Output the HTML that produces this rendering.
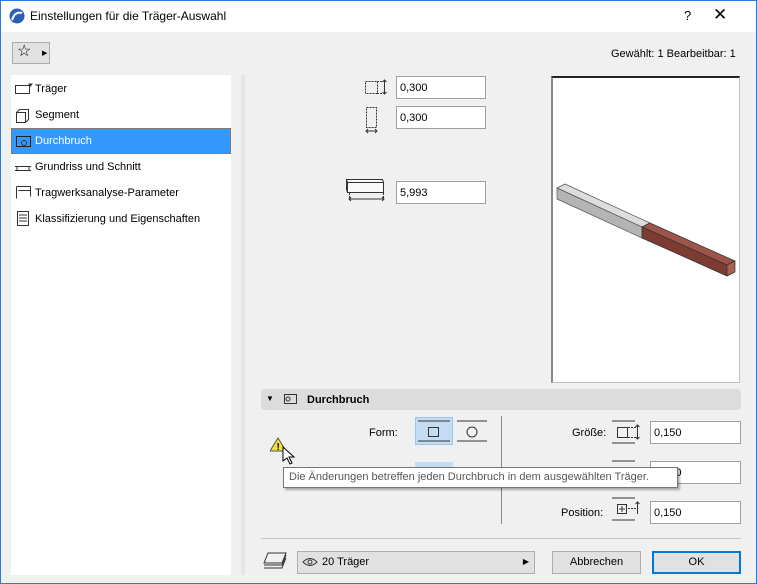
<!DOCTYPE html>
<html><head><meta charset="utf-8"><style>
*{box-sizing:border-box;margin:0;padding:0}
body{width:757px;height:584px;overflow:hidden;font-family:"Liberation Sans",sans-serif;font-size:11px;color:#000;background:#f0f0f0;position:relative}
.win{position:absolute;left:0;top:0;width:757px;height:584px;background:#f0f0f0}
.frame{position:absolute;left:0;top:0;width:757px;height:584px;border:1px solid #2b79d8;pointer-events:none}
.title{position:absolute;left:0;top:0;width:757px;height:32px;background:#fff}
.abs{position:absolute}
.inp{position:absolute;background:#fff;border:1px solid #a0a0a0;height:23px;padding:1px 3px 0;line-height:21px;font-size:11px}
.li{position:absolute;left:11px;width:220px;height:26px;line-height:26px;padding-left:24px;font-size:11px}
.btn{position:absolute;background:#e1e1e1;border:1px solid #adadad;text-align:center;font-size:11px}
</style></head><body><div class="win">
<div class="title">
<svg class="abs" style="left:9px;top:8px" width="16" height="16"><circle cx="8" cy="8" r="7.5" fill="#2a5fb8"/><path d="M3 12 Q6 3 13 5" stroke="#fff" stroke-width="2" fill="none"/></svg>
<div class="abs" style="left:30px;top:9px;font-size:12px">Einstellungen für die Träger-Auswahl</div>
<div class="abs" style="left:684px;top:8px;font-size:13px">?</div>
<div class="abs" style="left:713px;top:5px;font-size:17px;font-weight:300">✕</div>
</div>
<div class="btn" style="left:12px;top:42px;width:38px;height:22px;font-size:16px;line-height:18px;text-align:left;padding-left:4px">☆<span style="font-size:7px;position:absolute;left:29px;top:2px">▶</span></div>
<div class="abs" style="left:611px;top:48px">Gewählt: 1 Bearbeitbar: 1</div>
<div class="abs" style="left:11px;top:75px;width:220px;height:500px;background:#fff"></div>
<div class="abs" style="left:241px;top:75px;width:4px;height:500px;background:#e6e6e6"></div>
<div class="li" style="top:76px">Träger</div>
<div class="li" style="top:102px">Segment</div>
<div class="li" style="top:128px;background:#3399ff;color:#fff;border:1px dotted #c06000;left:11px;width:220px;padding-left:23px;line-height:24px">Durchbruch</div>
<div class="li" style="top:154px">Grundriss und Schnitt</div>
<div class="li" style="top:180px">Tragwerksanalyse-Parameter</div>
<div class="li" style="top:206px">Klassifizierung und Eigenschaften</div>
<svg class="abs" style="left:14px;top:82px" width="20" height="150" fill="none" stroke="#333">
<rect x="1.5" y="3.5" width="14" height="8"/><path d="M15 2l3 0l-1.5 2z" fill="#333"/>
<path d="M2.5 30.5h9v10h-9zM2.5 30.5l3-3h9v10l-3 3"/>
<rect x="2.5" y="54.5" width="14" height="10" stroke="#222"/><circle cx="10" cy="61" r="2.5"/>
<path d="M1 84.5h16M1 88.5h16M3 84.5v4M15 84.5v4"/>
<path d="M2.5 104.5h14v10M2.5 104.5v12M4.5 108.5h12"/>
<path d="M3.5 129.5h11v14h-11zM5 133h8M5 136h8M5 139h8"/>
</svg>
<svg class="abs" style="left:344px;top:75px" width="50" height="130" fill="none" stroke="#333">
<rect x="21.5" y="6.5" width="12" height="12" stroke-dasharray="2 1"/><path d="M33 6.5h6M33 18.5h6" stroke-dasharray="2 1"/><path d="M40.5 5v14M38.5 7l2-2 2 2M38.5 17l2 2 2-2"/>
<rect x="22.5" y="32.5" width="10" height="20" stroke-dasharray="2 1"/><path d="M22 56h11M24 54l-2 2 2 2M31 54l2 2-2 2"/>
<path d="M3.5 107.5h36v10h-36zM3.5 107.5l-1-3h36l1 3M2.5 104.5v10l1 3" fill="#f8f8f8"/><path d="M5.5 118v6M39.5 118v6" stroke-dasharray="2 1"/><path d="M5 124h35M7 122l-2 2 2 2M38 122l2 2-2 2"/>
</svg>
<div class="inp" style="left:396px;top:76px;width:90px">0,300</div>
<div class="inp" style="left:396px;top:106px;width:90px">0,300</div>
<div class="inp" style="left:396px;top:181px;width:90px">5,993</div>
<div class="abs" style="left:551px;top:76px;width:189px;height:307px;background:#fff;border:1px solid #c0c0c0;border-top:2px solid #222;border-left:2px solid #888"></div>
<svg class="abs" style="left:551px;top:76px" width="189" height="307" stroke-linejoin="round">
<polygon points="6,112 14,108 99,147 91,151" fill="#ddd" stroke="#555" stroke-width=".7"/>
<polygon points="6,112 91,151 91,162 6,123" fill="#b4b4b4" stroke="#555" stroke-width=".7"/>
<polygon points="91,151 99,147 184,185 176,189" fill="#9c5548" stroke="#333" stroke-width=".7"/>
<polygon points="91,151 176,189 176,200 91,162" fill="#7c3c32" stroke="#333" stroke-width=".7"/>
<polygon points="176,189 184,185 184,196 176,200" fill="#a86052" stroke="#333" stroke-width=".7"/>
</svg>
<div class="abs" style="left:261px;top:389px;width:480px;height:21px;background:#dcdcdc;border-radius:3px"></div>
<div class="abs" style="left:266px;top:394px;font-size:8px">▼</div>
<svg class="abs" style="left:281px;top:392px" width="18" height="14" fill="none" stroke="#333"><rect x="3.5" y="2.5" width="12" height="9"/><circle cx="7" cy="7" r="2"/></svg>
<div class="abs" style="left:307px;top:394px;font-weight:bold">Durchbruch</div>
<div class="abs" style="left:369px;top:427px">Form:</div>
<div class="abs" style="left:415px;top:417px;width:38px;height:28px;background:#c3dcf3;border:1px solid #9cc5ee"></div>
<svg class="abs" style="left:415px;top:417px" width="75" height="30" fill="none" stroke="#333"><path d="M3 4h32M3 24h32M42 4h30M42 24h30"/><rect x="13.5" y="10.5" width="10" height="9"/><circle cx="57" cy="15" r="5"/></svg>
<div class="abs" style="left:415px;top:462px;width:38px;height:10px;background:#c3dcf3"></div>
<div class="abs" style="left:501px;top:416px;width:1px;height:108px;background:#888"></div>
<svg class="abs" style="left:270px;top:437px" width="18" height="15"><polygon points="8,1 16,14 0,14" fill="#f2e234" stroke="#555"/><text x="6.5" y="13" font-size="10" font-weight="bold" font-family="Liberation Sans">!</text></svg>
<div class="abs" style="left:572px;top:427px">Größe:</div>
<div class="abs" style="left:561px;top:507px">Position:</div>
<svg class="abs" style="left:611px;top:420px" width="35" height="105" fill="none" stroke="#333"><path d="M1 1h23M1 23h23M1 41h23M1 100h23M1 78h23"/><rect x="6.5" y="7.5" width="10" height="10"/><path d="M17 7.5h8M17 17.5h8M17 88.5h8" stroke-dasharray="2 1"/><path d="M26.5 5v14M24.5 7l2-2 2 2M24.5 17l2 2 2-2M26.5 82v12M24.5 84l2-2 2 2M11 86v6M8 89h6"/><rect x="6.5" y="84.5" width="9" height="9"/></svg>
<div class="inp" style="left:650px;top:421px;width:91px">0,150</div>
<div class="inp" style="left:650px;top:461px;width:91px">0,150</div>
<div class="inp" style="left:650px;top:501px;width:91px">0,150</div>
<div class="abs" style="left:283px;top:467px;width:395px;height:21px;background:#fff;border:1px solid #767676;box-shadow:2px 2px 2px rgba(0,0,0,.3);padding:3px 5px;color:#575757">Die Änderungen betreffen jeden Durchbruch in dem ausgewählten Träger.</div>
<svg class="abs" style="left:282px;top:446px" width="16" height="20"><path d="M1 1v14l4-3 3 6 2-1-3-6h5z" fill="#fff" stroke="#000"/></svg>
<div class="abs" style="left:261px;top:538px;width:480px;height:1px;background:#c8c8c8"></div>
<svg class="abs" style="left:262px;top:551px" width="26" height="20" fill="none" stroke="#333"><path d="M6 2h18l-4 10h-18zM2 14h18l4-10M2 17h18l4-10"/></svg>
<div class="btn" style="left:297px;top:551px;width:238px;height:23px;text-align:left;padding:4px 0 0 24px">20 Träger<span style="position:absolute;right:5px;top:5px;font-size:8px">▶</span></div>
<svg class="abs" style="left:302px;top:557px" width="16" height="10" fill="none" stroke="#333"><path d="M1 5q7-7 14 0q-7 7-14 0z"/><circle cx="8" cy="5" r="2"/></svg>
<div class="btn" style="left:552px;top:551px;width:89px;height:23px;line-height:21px">Abbrechen</div>
<div class="btn" style="left:652px;top:551px;width:89px;height:23px;line-height:19px;border:2px solid #0078d7">OK</div>
</div><div class="frame"></div></body></html>
